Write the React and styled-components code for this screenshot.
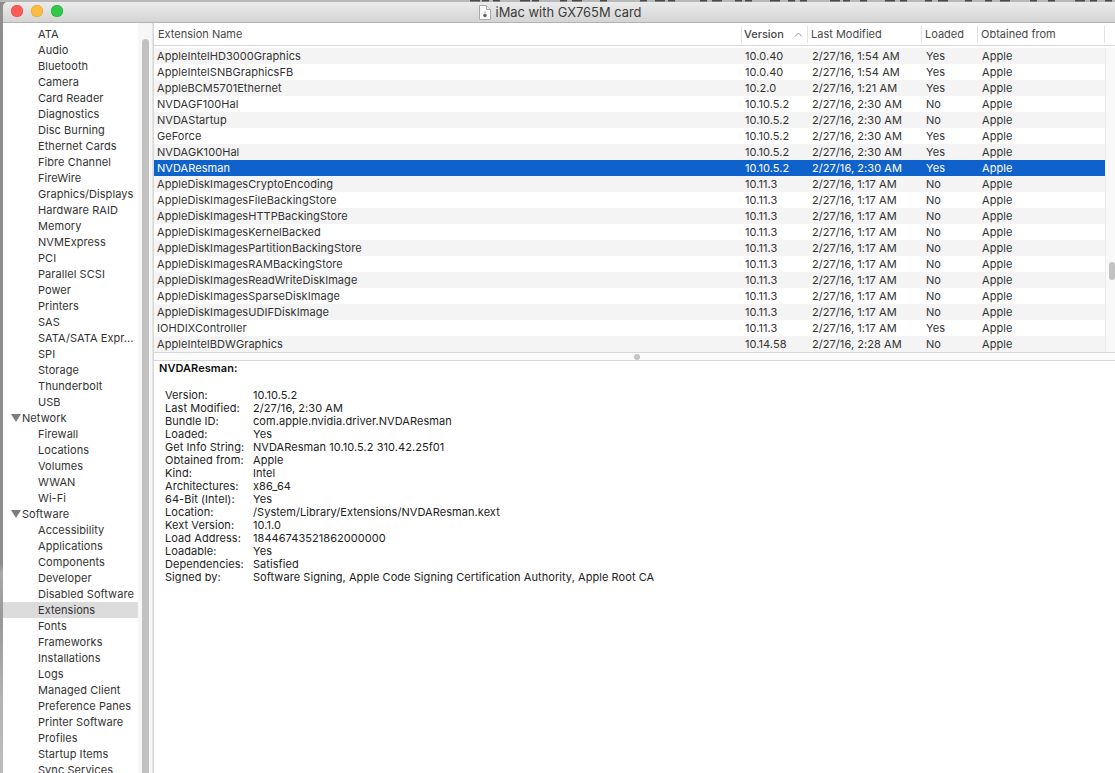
import React from "react";
import styled, { createGlobalStyle } from "styled-components";

const Global = createGlobalStyle`
  html, body { margin: 0; padding: 0; background: #fff; overflow: hidden; }
  #root { width: 1115px; height: 773px; overflow: hidden; }
  * { box-sizing: border-box; }
`;
const FONT = `"Inter", "Liberation Sans", sans-serif`;

const Page = styled.div`
  width: 1115px; height: 773px; display: flex; flex-direction: column; overflow: hidden;
  font-family: ${FONT}; font-size: 11px; letter-spacing: .06px; color: #333; background: #fff;
`;
const Backdrop = styled.svg`display: block; flex: 0 0 2px; width: 1115px; height: 2px; background: #b8b8b8;`;
const Desk = styled.div`
  flex: 1; display: flex; min-height: 0;
  background: linear-gradient(#8e8e8e 0 73%, #a8a8a8 74%, #989898 80%, #b2b2b2 90%, #bdbdbd);
`;
const Window = styled.div`
  margin-left: 3px; flex: 1; display: flex; flex-direction: column; min-width: 0;
  border-top-left-radius: 5px; overflow: hidden; background: #fff;
`;
const TitleBar = styled.div`
  flex: 0 0 21px; display: flex; align-items: center; position: relative; justify-content: center;
  background: linear-gradient(#ebebeb, #d4d4d4); border-bottom: 1px solid #b2b2b2; padding-left: 2px;
`;
const Lights = styled.div`
  position: absolute; left: 8px; top: 3px; display: flex; gap: 8px;
`;
const Light = styled.span`
  width: 12px; height: 12px; border-radius: 50%; background: ${p => p.$c}; box-shadow: inset 0 0 0 .5px ${p => p.$b};
`;
const Title = styled.div`
  display: flex; align-items: center; gap: 5px; font-size: 12.9px; letter-spacing: 0; color: #3c3c3c;
`;
const Body = styled.div`flex: 1; display: flex; min-height: 0;`;
const Sidebar = styled.div`
  flex: 0 0 135px; padding-top: 3px; overflow: hidden; background: #fff;
`;
const SideRow = styled.div`
  height: 16px; line-height: 16px; padding-left: ${p => p.$section ? 19 : 35}px; position: relative; white-space: nowrap;
  background: ${p => p.$active ? "#dcdcdc" : "transparent"}; color: #333;
  &::before {
    content: ${p => p.$section ? '""' : "none"}; position: absolute; left: 8px; top: 4px;
    border-left: 5px solid transparent; border-right: 5px solid transparent; border-top: 8px solid #7d7d7d;
  }
`;
const SideTrack = styled.div`
  flex: 0 0 15px; background: #f7f7f7; padding: 16px 3px 0 4px; border-right: 1px solid #e4e4e4;
`;
const SideThumb = styled.div`height: 100%; background: #c1c1c1; border-radius: 4px 4px 0 0;`;
const Main = styled.div`flex: 1; display: flex; flex-direction: column; min-width: 0; border-left: 1px solid #d8d8d8;`;
const Header = styled.div`
  flex: 0 0 23px; display: flex; align-items: center; border-bottom: 1px solid #d6d6d6; background: #fff;
`;
const HeadCell = styled.div`
  width: ${p => p.$w}px; height: 17px; line-height: 17px; padding-left: ${p => p.$pad ?? 3}px; position: relative; white-space: nowrap;
  color: #484848; font-weight: ${p => p.$sorted ? 500 : 400}; letter-spacing: 0;
  border-right: 1px solid #e2e2e2;
`;
const SortMark = styled.svg`position: absolute; right: 4px; top: 6px;`;
const TableWrap = styled.div`flex: 0 0 306px; display: flex; padding-top: 2px; background: #fff;`;
const Rows = styled.div`flex: 0 0 951px;`;
const Row = styled.div`
  height: 16px; line-height: 16px; display: flex; white-space: nowrap;
  background: ${p => p.$sel ? "#0f62cc" : p.$odd ? "#f4f4f4" : "#fff"};
  color: ${p => p.$sel ? "#fff" : "#333"};
`;
const Cell = styled.div`width: ${p => p.$w}px; padding-left: ${p => p.$pad}px;`;
const TableTrack = styled.div`flex: 1; background: #f9f9f9; border-left: 1px solid #ececec; position: relative;`;
const TableThumb = styled.div`
  position: absolute; right: 0; top: 214px; width: 6px; height: 18px; border-radius: 3px; background: #c2c2c2;
`;
const Splitter = styled.div`
  flex: 0 0 9px; display: flex; align-items: center; justify-content: center; background: #fbfbfb;
  border-top: 1px solid #d8d8d8; border-bottom: 1px solid #d8d8d8; padding-left: 5px;
`;
const Grip = styled.span`width: 6px; height: 6px; border-radius: 50%; background: #c4c4c4;`;
const Detail = styled.div`flex: 1; padding: 1px 0 0 5px; color: #222; background: #fff;`;
const DetailTitle = styled.div`height: 13px; line-height: 13px; font-weight: 600; color: #111;`;
const DetailList = styled.div`
  margin: 14px 0 0 6px; display: grid; grid-template-columns: 88px 1fr; grid-auto-rows: 13px; line-height: 13px;
`;
const Label = styled.div``;
const Value = styled.div`white-space: nowrap;`;

const side = [
  ["ATA"],["Audio"],["Bluetooth"],["Camera"],["Card Reader"],["Diagnostics"],["Disc Burning"],["Ethernet Cards"],["Fibre Channel"],["FireWire"],["Graphics/Displays"],["Hardware RAID"],["Memory"],["NVMExpress"],["PCI"],["Parallel SCSI"],["Power"],["Printers"],["SAS"],["SATA/SATA Expr..."],["SPI"],["Storage"],["Thunderbolt"],["USB"],
  ["Network",1],["Firewall"],["Locations"],["Volumes"],["WWAN"],["Wi-Fi"],
  ["Software",1],["Accessibility"],["Applications"],["Components"],["Developer"],["Disabled Software"],["Extensions",0,1],["Fonts"],["Frameworks"],["Installations"],["Logs"],["Managed Client"],["Preference Panes"],["Printer Software"],["Profiles"],["Startup Items"],["Sync Services"],
];
const t1 = "2/27/16, 1:17 AM", t2 = "2/27/16, 2:30 AM", t3 = "2/27/16, 1:54 AM";
const rows = [
  ["AppleIntelHD3000Graphics","10.0.40",t3,"Yes"],
  ["AppleIntelSNBGraphicsFB","10.0.40",t3,"Yes"],
  ["AppleBCM5701Ethernet","10.2.0","2/27/16, 1:21 AM","Yes"],
  ["NVDAGF100Hal","10.10.5.2",t2,"No"],
  ["NVDAStartup","10.10.5.2",t2,"No"],
  ["GeForce","10.10.5.2",t2,"Yes"],
  ["NVDAGK100Hal","10.10.5.2",t2,"Yes"],
  ["NVDAResman","10.10.5.2",t2,"Yes"],
  ["AppleDiskImagesCryptoEncoding","10.11.3",t1,"No"],
  ["AppleDiskImagesFileBackingStore","10.11.3",t1,"No"],
  ["AppleDiskImagesHTTPBackingStore","10.11.3",t1,"No"],
  ["AppleDiskImagesKernelBacked","10.11.3",t1,"No"],
  ["AppleDiskImagesPartitionBackingStore","10.11.3",t1,"No"],
  ["AppleDiskImagesRAMBackingStore","10.11.3",t1,"No"],
  ["AppleDiskImagesReadWriteDiskImage","10.11.3",t1,"No"],
  ["AppleDiskImagesSparseDiskImage","10.11.3",t1,"No"],
  ["AppleDiskImagesUDIFDiskImage","10.11.3",t1,"No"],
  ["IOHDIXController","10.11.3",t1,"Yes"],
  ["AppleIntelBDWGraphics","10.14.58","2/27/16, 2:28 AM","No"],
];
const details = [
  ["Version:","10.10.5.2"],["Last Modified:","2/27/16, 2:30 AM"],["Bundle ID:","com.apple.nvidia.driver.NVDAResman"],["Loaded:","Yes"],
  ["Get Info String:","NVDAResman 10.10.5.2 310.42.25f01"],["Obtained from:","Apple"],["Kind:","Intel"],["Architectures:","x86_64"],["64-Bit (Intel):","Yes"],
  ["Location:","/System/Library/Extensions/NVDAResman.kext"],["Kext Version:","10.1.0"],["Load Address:","18446743521862000000"],["Loadable:","Yes"],["Dependencies:","Satisfied"],
  ["Signed by:","Software Signing, Apple Code Signing Certification Authority, Apple Root CA"],
];
const dashes = [470,482,493,520,532,560,572,600,640,655,668,700,712,735,745,770,788,800,830,843,860,885,900,925,938,965,985,1000,1030,1048,1075,1090,1105];

export default function App() {
  return (
    <Page>
      <Global />
      <Backdrop viewBox="0 0 1115 2">
        {dashes.map((x, i) => <rect key={x} x={x} y="0" width={i % 3 === 0 ? 10 : 7} height="1.5" fill="#4a4a4a" />)}
      </Backdrop>
      <Desk>
        <Window>
          <TitleBar>
            <Lights>
              <Light $c="#fc5b57" $b="#e0443e" />
              <Light $c="#fdbc40" $b="#dea123" />
              <Light $c="#34c84a" $b="#1aab29" />
            </Lights>
            <Title>
              <svg width="12" height="15" viewBox="0 0 12 15">
                <path d="M.5.5h7l4 4v10H.5z" fill="#fafafa" stroke="#aaa" />
                <path d="M7.5.5v4h4" fill="#e4e4e4" stroke="#aaa" />
                <circle cx="6" cy="10.5" r="1.8" fill="#666" />
                <rect x="5.5" y="6.5" width="1" height="2" fill="#999" />
              </svg>
              iMac with GX765M card
            </Title>
          </TitleBar>
          <Body>
            <Sidebar>
              {side.map(([t, s, a]) => <SideRow key={t} $section={s} $active={a}>{t}</SideRow>)}
            </Sidebar>
            <SideTrack><SideThumb /></SideTrack>
            <Main>
              <Header>
                <HeadCell $w={588} $pad={4}>Extension Name</HeadCell>
                <HeadCell $w={66} $sorted $pad={2}>Version
                  <SortMark width="9" height="5" viewBox="0 0 9 5"><path d="M1 4.5 4.5 1 8 4.5" fill="none" stroke="#999" /></SortMark>
                </HeadCell>
                <HeadCell $w={114}>Last Modified</HeadCell>
                <HeadCell $w={56}>Loaded</HeadCell>
                <HeadCell $w={127}>Obtained from</HeadCell>
              </Header>
              <TableWrap>
                <Rows>
                  {rows.map((r, i) => (
                    <Row key={r[0]} $odd={i % 2 === 0} $sel={r[0] === "NVDAResman"}>
                      <Cell $w={588} $pad={3}>{r[0]}</Cell>
                      <Cell $w={67} $pad={3}>{r[1]}</Cell>
                      <Cell $w={114} $pad={3}>{r[2]}</Cell>
                      <Cell $w={56} $pad={3}>{r[3]}</Cell>
                      <Cell $w={120} $pad={3}>Apple</Cell>
                    </Row>
                  ))}
                </Rows>
                <TableTrack><TableThumb /></TableTrack>
              </TableWrap>
              <Splitter><Grip /></Splitter>
              <Detail>
                <DetailTitle>NVDAResman:</DetailTitle>
                <DetailList>
                  {details.map(([l, v]) => (
                    <React.Fragment key={l}><Label>{l}</Label><Value>{v}</Value></React.Fragment>
                  ))}
                </DetailList>
              </Detail>
            </Main>
          </Body>
        </Window>
      </Desk>
    </Page>
  );
}
